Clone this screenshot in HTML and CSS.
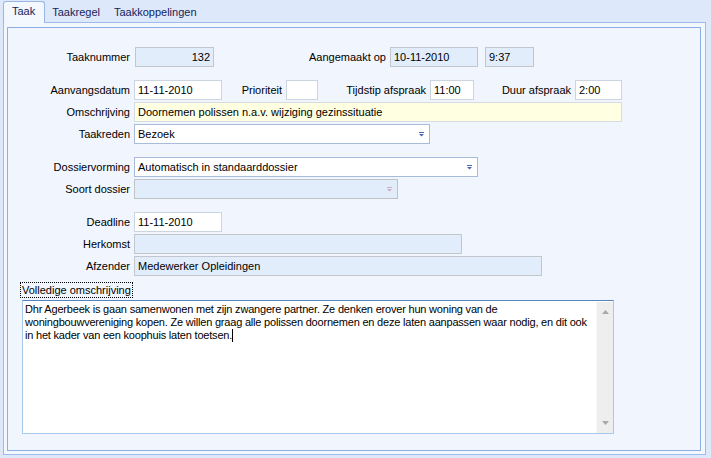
FILE: index.html
```html
<!DOCTYPE html>
<html>
<head>
<meta charset="utf-8">
<link rel="stylesheet" href="styles.css">
</head>
<body>
<div class="tabs">
  <div class="tab active">Taak</div>
  <div class="tab">Taakregel</div>
  <div class="tab">Taakkoppelingen</div>
</div>
<div class="panel">
  <div class="inner">
    <div class="row">
      <span class="lbl lbl-first">Taaknummer</span>
      <span class="fld dis num w79">132</span>
      <span class="lbl l172">Aangemaakt op</span>
      <span class="fld dis w88">10-11-2010</span>
      <span class="fld dis w49 ml7">9:37</span>
    </div>
    <div class="row sp">
      <span class="lbl">Aanvangsdatum</span>
      <span class="fld w88">11-11-2010</span>
      <span class="lbl l60">Prioriteit</span>
      <span class="fld w32"></span>
      <span class="lbl l108">Tijdstip afspraak</span>
      <span class="fld w44">11:00</span>
      <span class="lbl l97">Duur afspraak</span>
      <span class="fld w47">2:00</span>
    </div>
    <div class="row">
      <span class="lbl">Omschrijving</span>
      <span class="fld yel w488">Doornemen polissen n.a.v. wijziging gezinssituatie</span>
    </div>
    <div class="row">
      <span class="lbl">Taakreden</span>
      <span class="fld combo w296"><span class="val">Bezoek</span><svg class="arr" width="7" height="5" viewBox="0 0 7 5"><rect x="1" y="0" width="5" height="1" fill="#4a66b0"/><polygon points="1,2 6,2 3.5,4.5" fill="#4a66b0"/></svg></span>
    </div>
    <div class="row sp">
      <span class="lbl">Dossiervorming</span>
      <span class="fld combo w344"><span class="val">Automatisch in standaarddossier</span><svg class="arr" width="7" height="5" viewBox="0 0 7 5"><rect x="1" y="0" width="5" height="1" fill="#4a66b0"/><polygon points="1,2 6,2 3.5,4.5" fill="#4a66b0"/></svg></span>
    </div>
    <div class="row">
      <span class="lbl">Soort dossier</span>
      <span class="fld combo dis w264"><span class="val"></span><svg class="arr" width="7" height="5" viewBox="0 0 7 5"><rect x="1" y="0" width="5" height="1" fill="#d4aac4"/><polygon points="1,2 6,2 3.5,4.5" fill="#d4aac4"/></svg></span>
    </div>
    <div class="row sp">
      <span class="lbl">Deadline</span>
      <span class="fld w88">11-11-2010</span>
    </div>
    <div class="row">
      <span class="lbl">Herkomst</span>
      <span class="fld dis w328"></span>
    </div>
    <div class="row">
      <span class="lbl">Afzender</span>
      <span class="fld dis w408">Medewerker Opleidingen</span>
    </div>
    <div class="memo-label">Volledige omschrijving</div>
    <div class="memo">
      <div class="memo-text">Dhr Agerbeek is gaan samenwonen met zijn zwangere partner. Ze denken erover hun woning van de<br>woningbouwvereniging kopen. Ze willen graag alle polissen doornemen en deze laten aanpassen waar nodig, en dit ook<br>in het kader van een koophuis laten toetsen.<span class="caret"></span></div>
      <div class="scroll">
        <svg width="7" height="4" viewBox="0 0 7 4"><polygon points="3.5,0 7,4 0,4" fill="#a8a8a8"/></svg>
        <svg width="7" height="4" viewBox="0 0 7 4"><polygon points="0,0 7,0 3.5,4" fill="#a8a8a8"/></svg>
      </div>
    </div>
  </div>
</div>
</body>
</html>
```
FILE: styles.css
```css
html, body {
  margin: 0;
  padding: 0;
}
body {
  width: 711px;
  height: 458px;
  overflow: hidden;
  background: #dde8fb;
  font: 11px "Liberation Sans", Arial, sans-serif;
  color: #000;
}
.tabs {
  display: flex;
  align-items: flex-end;
  height: 22px;
  padding-top: 2px;
  margin-left: 3px;
  box-sizing: border-box;
}
.tab {
  height: 20px;
  line-height: 20px;
  padding: 0 7px;
  color: #15245a;
  white-space: nowrap;
}
.tab.active {
  position: relative;
  z-index: 1;
  height: 21px;
  margin-bottom: -1px;
  line-height: 19px;
  padding: 0 9px 0 8px;
  background: #f3f7fe;
  border: 1px solid #97b6e4;
  border-bottom: none;
  border-radius: 3px 3px 0 0;
}
.panel {
  margin-left: 3px;
  width: 703px;
  height: 433px;
  box-sizing: border-box;
  border: 1px solid #9dbde8;
  background: #f3f7fe;
  padding: 4px 4px 3px 3px;
}
.inner {
  height: 100%;
  box-sizing: border-box;
  border: 1px solid #8cb0e4;
  background: #f0f5fe;
  padding-top: 19px;
}
.row {
  display: flex;
  height: 20px;
  margin-bottom: 2px;
}
.row.sp {
  margin-top: 13px;
}
.lbl {
  width: 122px;
  margin-right: 4px;
  text-align: right;
  line-height: 20px;
  white-space: nowrap;
}
.lbl-first { margin-right: 5px; }
.l172 { width: 172px; }
.l60 { width: 60px; }
.l108 { width: 108px; }
.l97 { width: 97px; }
.fld {
  display: block;
  height: 20px;
  box-sizing: border-box;
  border: 1px solid #ccd4df;
  background: #fff;
  padding: 0 3px;
  line-height: 18px;
  white-space: nowrap;
  overflow: hidden;
}
.fld.dis {
  background: #e2edfc;
  border-color: #c2c7cd;
}
.fld.yel {
  background: #ffffe2;
  border-color: #d6dce6;
}
.fld.num { text-align: right; }
.fld.combo {
  display: flex;
  align-items: center;
  border-color: #a8bcd9;
  padding-right: 4px;
}
.fld.combo.dis { border-color: #bfc3c8; }
.val { flex: 1; }
.arr { display: block; }
.ml7 { margin-left: 7px; }
.w32 { width: 32px; }
.w44 { width: 44px; }
.w47 { width: 47px; }
.w49 { width: 49px; }
.w79 { width: 79px; }
.w88 { width: 88px; }
.w264 { width: 264px; }
.w296 { width: 296px; }
.w328 { width: 328px; }
.w344 { width: 344px; }
.w408 { width: 408px; }
.w488 { width: 488px; }
.memo-label {
  display: block;
  width: max-content;
  margin: 6px 0 0 12px;
  height: 16px;
  box-sizing: border-box;
  border: 1px dotted #000;
  padding: 0 1px;
  line-height: 14px;
}
.memo {
  display: flex;
  margin: 2px 0 0 14px;
  width: 592px;
  height: 134px;
  box-sizing: border-box;
  border: 1px solid #a6c9ea;
  border-top-color: #5584c0;
  background: #fff;
}
.memo-text {
  flex: 1;
  padding: 2px 2px;
  line-height: 13px;
  letter-spacing: -0.2px;
  white-space: nowrap;
  overflow: hidden;
}
.caret {
  display: inline-block;
  width: 1px;
  height: 13px;
  background: #000;
  vertical-align: top;
}
.scroll {
  width: 17px;
  margin-top: 1px;
  background: #eeeeee;
  border-left: 1px solid #f6f6f6;
  box-sizing: border-box;
  display: flex;
  flex-direction: column;
  justify-content: space-between;
  align-items: center;
  padding: 8px 0 8px;
}
.scroll svg { display: block; }
```
